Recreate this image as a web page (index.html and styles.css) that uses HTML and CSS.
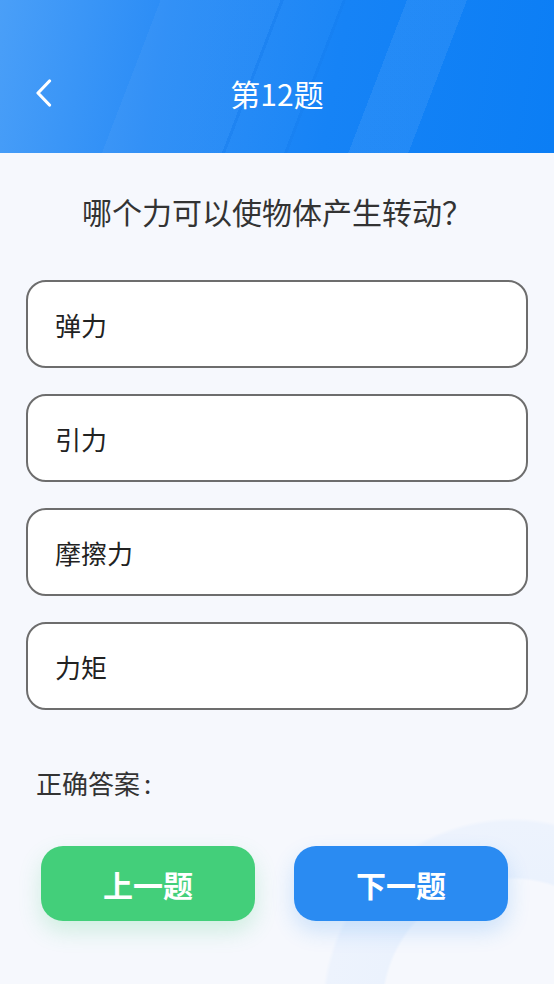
FILE: index.html
```html
<!DOCTYPE html>
<html lang="zh-CN">
<head>
  <meta charset="UTF-8" />
  <meta name="viewport" content="width=device-width, initial-scale=1.0"/>
  <title>第12题</title>
  <link rel="stylesheet" href="styles.css">
</head>
<body>
  <div class="page">
    <header class="topbar">
      <div class="nav">
        <a class="back" href="#">
          <svg width="16" height="28" viewBox="0 0 16 28">
            <polyline points="13.5,2 2,14 13.5,26" fill="none" stroke="#fff" stroke-width="3.2" stroke-linecap="round" stroke-linejoin="round"/>
          </svg>
        </a>
        <h1 class="title">第12题</h1>
        <span></span>
      </div>
    </header>

    <main class="quiz">
      <p class="question">哪个力可以使物体产生转动？</p>

      <ul class="options">
        <li class="option">弹力</li>
        <li class="option">引力</li>
        <li class="option">摩擦力</li>
        <li class="option">力矩</li>
      </ul>

      <p class="answer">正确答案<span class="colon">:</span></p>

      <div class="actions">
        <button type="button" class="btn btn-prev">上一题</button>
        <button type="button" class="btn btn-next">下一题</button>
      </div>
    </main>
  </div>
</body>
</html>
```

FILE: styles.css
```css
body {
  margin: 0;
  font-family: "Noto Sans CJK SC", "Noto Sans", sans-serif;
  color: #333;
  background: #f6f8fd;
}
.page {
  width: 554px;
  min-height: 984px;
  overflow: hidden;
  background:
    radial-gradient(circle at 512px 1008px, transparent 128px, #ebf2fd 131px, #edf3fd 186px, transparent 190px),
    #f6f8fd;
}

/* header */
.topbar {
  height: 153px;
  padding-top: 55px;
  box-sizing: border-box;
  background:
    linear-gradient(111deg, transparent 0, transparent 150px, rgba(255,255,255,0.04) 150px, rgba(255,255,255,0.04) 262px, rgba(0,60,160,0.05) 262px, rgba(0,60,160,0.05) 265px, rgba(255,255,255,0.025) 265px, rgba(255,255,255,0.025) 320px, rgba(0,60,160,0.04) 320px, rgba(0,60,160,0.04) 323px, transparent 323px, transparent 380px, rgba(255,255,255,0.07) 380px, rgba(255,255,255,0.07) 436px, transparent 436px),
    linear-gradient(100deg, #4a9ff8 0%, #2a8cf6 30%, #1683f6 60%, #0b7ef5 100%);
}
.nav {
  height: 76px;
  display: grid;
  grid-template-columns: 1fr auto 1fr;
  align-items: center;
}
.back {
  display: flex;
  align-items: center;
  padding-left: 36px;
  height: 40px;
}
.title {
  margin: 0;
  font-size: 30px;
  font-weight: normal;
  color: #fff;
}

/* question */
.quiz {
  padding: 38px 26px 0 26px;
}
.question {
  margin: 0;
  font-size: 30px;
  line-height: 40px;
  text-align: center;
  color: #333;
}
.options {
  list-style: none;
  margin: 49px 0 0 0;
  padding: 0;
  display: flex;
  flex-direction: column;
  gap: 26px;
}
.option {
  height: 88px;
  box-sizing: border-box;
  border: 2px solid #6d6d6d;
  border-radius: 20px;
  background: #fff;
  display: flex;
  align-items: center;
  padding-left: 27px;
  font-size: 26px;
  color: #222;
}
.answer {
  margin: 55px 0 0 10px;
  font-size: 26px;
  line-height: 36px;
  color: #333;
}
.colon {
  margin-left: 4px;
}

/* buttons */
.actions {
  display: flex;
  gap: 39px;
  margin-top: 45px;
  padding-left: 15px;
}
.btn {
  width: 214px;
  height: 75px;
  border: none;
  border-radius: 22px;
  color: #fff;
  font-family: "Noto Sans CJK SC", sans-serif;
  font-size: 30px;
  font-weight: bold;
}
.btn-prev {
  background: #43cf7a;
  box-shadow: 0 10px 22px rgba(67, 207, 122, 0.22);
}
.btn-next {
  background: #2a8bf2;
  box-shadow: 0 10px 22px rgba(42, 139, 242, 0.2);
}
```
